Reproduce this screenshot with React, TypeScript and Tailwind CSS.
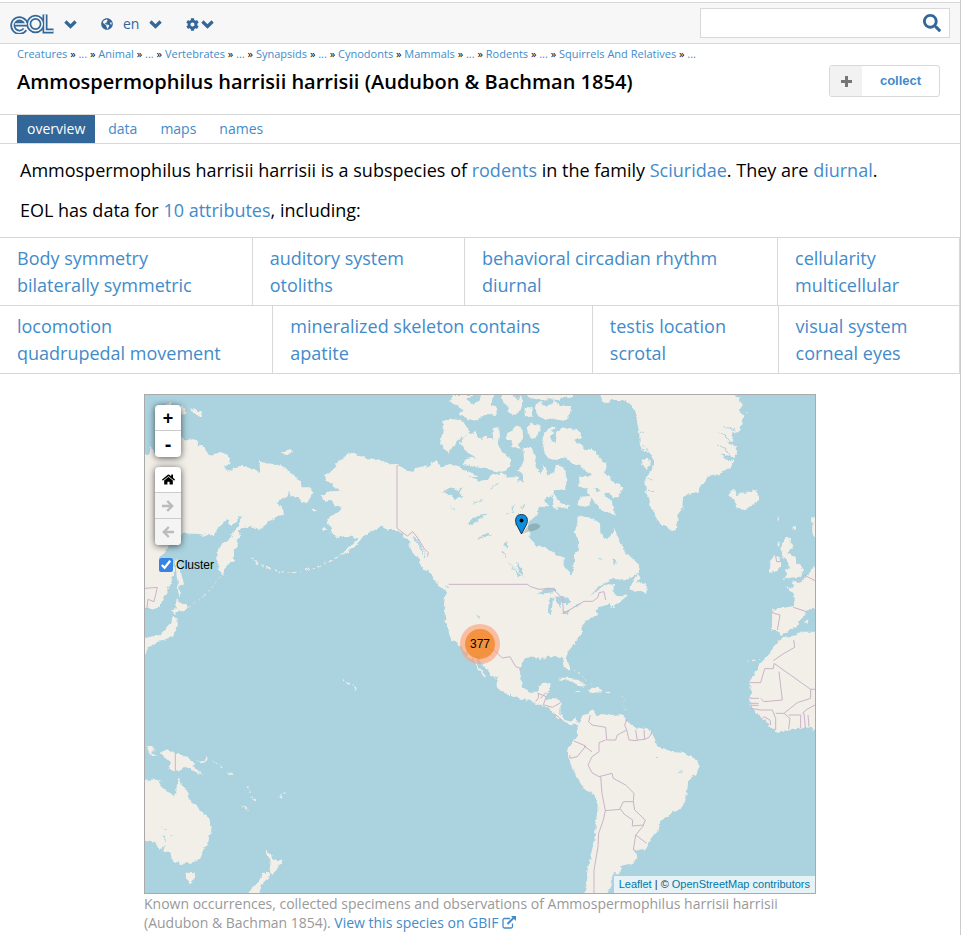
import { Fragment, type ReactNode } from "react";
import { FaCog, FaGlobeAmericas, FaHome, FaSearch } from "react-icons/fa";

const crumbs = ["Creatures", "...", "Animal", "...", "Vertebrates", "...", "Synapsids", "...", "Cynodonts", "Mammals", "...", "Rodents", "...", "Squirrels And Relatives", "..."];
const tabs = ["overview", "data", "maps", "names"];
const traits = [
  [["Body symmetry", "bilaterally symmetric"], ["auditory system", "otoliths"], ["behavioral circadian rhythm", "diurnal"], ["cellularity", "multicellular"]],
  [["locomotion", "quadrupedal movement"], ["mineralized skeleton contains", "apatite"], ["testis location", "scrotal"], ["visual system", "corneal eyes"]],
];

function Link({ children }: { children: ReactNode }) {
  return <a href="#" className="text-[#428bca]">{children}</a>;
}

function Logo() {
  return (
    <svg width="44" height="20" viewBox="0 0 44 20" fill="none" role="img" aria-label="EOL">
      <g stroke="#336699" strokeWidth="5">
        <path d="M35 0.500V17H43.500" />
        <circle cx="25.500" cy="10" r="6.700" />
        <path d="M15 15.300A6.700 6.700 0 1 1 16 10H5" />
      </g>
      <g stroke="#f7f7f7" strokeWidth="1.600">
        <path d="M35 0.500V17H43.500" />
        <circle cx="25.500" cy="10" r="6.700" />
        <path d="M15 15.300A6.700 6.700 0 1 1 16 10H5" />
      </g>
    </svg>
  );
}

function Chevron() {
  return (
    <svg width="13" height="9" viewBox="0 0 13 9" fill="none" stroke="currentColor" strokeWidth="3.200" aria-hidden="true">
      <path d="M1.400 1.500L6.500 6.500L11.600 1.500" />
    </svg>
  );
}

function Arrow({ left = false }: { left?: boolean }) {
  return (
    <svg width="12" height="12" viewBox="0 0 12 12" fill="none" stroke="currentColor" strokeWidth="2.400" aria-hidden="true">
      <path d={left ? "M12 6H2M6.800 1L1.800 6L6.800 11" : "M0 6H10M5.200 1L10.200 6L5.200 11"} />
    </svg>
  );
}

const land = [
  // Siberia
  "M-20 195L15 195L22 168L32 190L60 150L112 145L135 150L150 148L165 155L160 166L172 165L183 180L195 192L215 195L230 188L250 193L258 208L255 220L240 228L250 243L265 245L268 232L300 228L325 238L340 245L348 238L345 213L365 220L395 222L420 232L445 250L470 275L475 292L500 292L513 308L498 320L492 340L475 335L462 320L440 318L435 305L430 320L415 325L400 338L415 350L420 375L400 378L375 395L345 420L320 412L300 410L285 425L288 440L278 450L282 470L270 480L270 510L250 525L235 555L225 540L218 490L235 460L255 450L270 425L285 400L297 375L285 378L280 395L262 405L255 405L258 390L245 388L235 405L215 420L213 435L190 436L165 432L112 430L80 465L55 490L45 503L60 512L88 520L90 545L80 580L60 620L45 650L25 660L10 655L-20 665Z",
  "M92 510L108 520L112 550L120 583L105 590L112 620L103 610L100 570Z",
  "M98 625L115 640L132 652L115 664L100 664L92 674L84 662L95 655Z",
  "M85 680L100 685L102 705L92 725L80 740L60 750L40 752L30 765L15 770L12 784L3 790L-10 780L-10 745L20 740L50 735L70 712L82 700Z",
  "M414 188L425 178L442 177L447 187L430 193Z",
  "M138 55L155 60L178 68L172 80L155 78Z", "M112 48L125 52L127 70L112 75Z", "M64 42L80 35L80 50L64 48Z",
  "M496 355L512 357L522 362L510 365Z", "M532 416L545 415L550 422L538 424Z",
  // The Americas
  "M528 317L550 305L585 302L580 292L560 280L545 270L541 255L560 245L572 235L575 222L595 205L610 195L625 185L645 197L672 205L700 208L735 220L760 225L790 240L805 246L810 235L830 232L850 220L840 235L860 228L872 208L885 225L900 230L912 218L925 225L952 235L985 250L1010 265L1040 258L1072 250L1095 262L1120 262L1122 275L1140 272L1140 255L1122 240L1135 225L1140 208L1138 175L1160 170L1170 190L1178 215L1172 232L1190 250L1200 225L1215 255L1230 250L1236 222L1262 235L1270 270L1262 300L1232 300L1218 320L1200 330L1215 352L1187 350L1177 375L1160 392L1152 415L1157 440L1172 465L1202 475L1232 490L1262 505L1262 535L1282 553L1290 540L1287 500L1304 480L1307 455L1292 430L1300 400L1300 375L1345 385L1368 400L1369 430L1386 448L1404 430L1409 415L1419 435L1434 465L1444 485L1474 510L1487 530L1484 550L1454 568L1394 568L1364 592L1340 615L1360 602L1389 582L1414 585L1408 600L1413 615L1429 622L1449 610L1444 625L1419 640L1404 651L1396 642L1364 652L1358 662L1359 675L1344 680L1322 698L1312 710L1314 730L1300 750L1272 780L1267 800L1277 830L1272 845L1257 820L1252 805L1232 798L1207 800L1192 808L1172 800L1142 805L1130 830L1127 860L1137 890L1157 905L1182 905L1190 880L1220 877L1217 900L1207 915L1207 928L1232 928L1250 935L1249 970L1262 990L1282 995L1292 985L1304 1000L1312 980L1332 970L1349 958L1356 975L1379 972L1404 978L1439 975L1454 995L1474 1012L1519 1020L1534 1050L1539 1068L1584 1085L1624 1090L1659 1110L1666 1130L1654 1155L1632 1180L1627 1220L1609 1260L1579 1270L1549 1295L1544 1320L1524 1345L1504 1380L1489 1382L1466 1378L1478 1400L1469 1420L1432 1428L1429 1450L1409 1450L1404 1480L1384 1530L1320 1530L1327 1470L1332 1430L1344 1380L1352 1340L1359 1270L1362 1225L1344 1210L1317 1195L1307 1175L1282 1130L1270 1100L1274 1075L1292 1050L1302 1035L1300 1005L1277 1002L1257 993L1237 980L1227 965L1202 950L1172 935L1142 930L1112 920L1072 905L1060 890L1062 875L1037 845L1017 825L1007 800L992 795L1002 830L1027 860L1022 862L1002 840L990 815L977 805L952 770L930 752L918 740L904 690L900 640L907 600L912 590L894 590L872 570L862 555L847 540L832 525L822 505L802 480L792 450L760 420L732 420L712 410L692 420L670 432L650 450L635 470L610 485L580 500L610 478L635 455L640 445L620 440L600 442L580 440L560 428L562 415L548 400L555 385L580 370L590 350L570 345L560 330L550 335Z",
  "M895 584L912 596L909 604L888 591L870 576Z", "M822 514L834 510L840 525L842 540L832 530Z",
  // Arctic islands
  "M898 93L930 88L950 93L972 115L978 130L950 145L935 165L918 180L912 188L900 175L888 165L895 130Z",
  "M948 160L960 140L985 130L995 122L1000 140L1015 150L1025 140L1048 150L1045 115L1065 112L1068 140L1060 165L1080 190L1100 205L1098 232L1072 245L1040 240L1000 232L960 225L962 205L985 200L1000 205L975 190L960 178Z",
  "M1088 135L1105 120L1118 102L1135 120L1138 145L1125 160L1130 180L1105 172L1100 150L1088 150Z",
  "M1148 110L1165 100L1190 105L1185 125L1175 145L1155 145Z",
  "M1202 125L1222 110L1235 110L1220 140L1235 160L1240 125L1255 115L1280 115L1307 120L1312 140L1290 150L1315 165L1325 178L1344 175L1360 195L1385 220L1388 235L1378 245L1402 270L1438 292L1420 325L1408 325L1398 310L1375 308L1408 340L1412 375L1390 370L1362 350L1340 320L1325 295L1302 285L1310 270L1342 255L1320 240L1310 225L1280 218L1270 200L1240 210L1210 205L1202 190L1195 150Z",
  "M915 35L930 15L990 15L970 28L990 45L1005 30L1010 10L1050 15L1040 40L1060 55L1055 75L1025 72L1015 80L990 92L970 85L945 75L955 58L935 45Z",
  "M1072 10L1100 10L1120 32L1130 15L1138 35L1130 60L1110 75L1095 68L1090 45L1078 35Z",
  "M1145 55L1162 50L1165 80L1145 78Z",
  "M1176 40L1192 35L1200 48L1225 42L1230 30L1245 48L1278 48L1282 70L1262 92L1235 88L1202 88L1188 80L1172 62Z",
  "M1142 10L1290 10L1285 25L1260 22L1245 30L1210 28L1195 30L1160 25Z",
  "M1225 305L1235 318L1248 335L1275 345L1270 360L1245 350L1235 358L1225 345Z",
  "M1303 345L1310 320L1340 318L1340 345L1320 350Z", "M1305 260L1325 260L1322 280L1306 275Z",
  // Greenland, Iceland, Newfoundland
  "M1365 0L1375 35L1390 40L1405 30L1440 30L1465 50L1475 75L1485 125L1488 165L1495 180L1520 190L1530 215L1528 235L1505 260L1505 305L1515 320L1520 350L1550 405L1570 405L1585 423L1595 420L1602 380L1615 355L1617 325L1628 315L1660 305L1680 275L1694 260L1720 255L1750 240L1773 213L1744 208L1730 190L1775 205L1776 170L1750 155L1768 150L1760 130L1790 120L1793 95L1800 85L1788 60L1795 40L1775 15L1775 0Z",
  "M1496 205L1515 208L1520 225L1505 235L1495 225Z", "M1804 65L1812 68L1806 75Z",
  "M1756 315L1765 298L1780 315L1795 305L1822 305L1828 295L1845 315L1845 330L1825 345L1800 360L1775 348L1772 330Z",
  "M1458 600L1465 580L1480 553L1487 565L1480 575L1500 578L1512 600L1508 612L1488 605Z",
  // Europe and Africa
  "M1914 460L1928 445L1938 443L1936 460L1948 468L1940 480L1930 490L1948 495L1958 520L1970 530L1977 540L1970 560L1940 563L1915 570L1930 552L1920 545L1935 535L1928 510L1915 500L1912 485Z",
  "M1876 515L1890 500L1905 498L1912 515L1908 535L1885 548L1875 545Z",
  "M2030 530L2010 530L1995 550L1975 570L1960 580L1945 572L1950 590L1925 590L1940 600L1952 620L1950 648L1930 652L1900 655L1885 655L1884 670L1885 695L1880 715L1890 722L1905 724L1912 735L1930 728L1955 710L1965 695L1988 665L2000 655L2030 652Z",
  "M2030 725L1980 725L1950 737L1920 740L1905 750L1885 770L1878 790L1850 820L1825 860L1816 880L1824 910L1816 935L1822 955L1844 975L1860 990L1880 1010L1900 1025L1940 1020L1970 1015L2000 1012L2030 1030Z",
  "M2030 385L2004 385L2005 425L2014 450L2030 430Z", "M1982 695L1990 692L1988 702Z", "M1900 385L1906 382L1902 395Z", "M1948 412L1954 408L1952 422Z", "M1902 450L1907 465L1900 475Z",
  // Caribbean
  "M1240 873L1255 863L1280 863L1300 870L1322 886L1328 890L1305 888L1285 875L1265 868Z",
  "M1334 900L1344 893L1360 894L1378 904L1360 906L1344 910Z", "M1295 906L1310 906L1306 911Z", "M1388 905L1402 905L1400 910L1389 909Z",
  // Oceania
  "M48 1087L65 1078L80 1085L105 1092L130 1100L150 1118L145 1125L160 1140L175 1152L155 1150L135 1135L120 1130L110 1140L92 1142L70 1130L82 1118L68 1108Z",
  "M5 1070L25 1068L35 1080L20 1088L40 1095L22 1096Z", "M156 1112L180 1110L190 1098L196 1105L180 1118Z", "M205 1110L220 1125L214 1122Z", "M224 1126L238 1135L232 1135Z", "M248 1145L265 1149L270 1156L254 1152Z",
  "M-10 1168L52 1170L48 1190L88 1216L96 1210L100 1180L106 1158L115 1190L130 1205L135 1230L155 1243L170 1262L195 1285L202 1320L192 1355L172 1395L168 1410L140 1418L110 1422L90 1412L76 1390L60 1385L65 1365L48 1380L36 1355L-10 1348Z",
  "M125 1448L155 1450L150 1470L138 1480L128 1470Z",
  "M365 1378L380 1392L385 1408L414 1412L400 1435L385 1455L378 1445L382 1425Z",
  "M358 1448L376 1450L372 1465L350 1485L348 1505L335 1530L300 1530L315 1505L338 1485Z",
  "M290 1240L315 1260L305 1257Z", "M403 1218L412 1216L410 1223Z", "M630 892L639 895L634 900Z", "M414 1210L425 1207L420 1211Z",
];

const lakes = [
  "M895 305L920 292L935 300L956 292L945 310L958 320L935 330L920 315Z",
  "M970 400L990 380L1005 378L1028 372L1015 385L1000 395L985 405Z",
  "M1000 445L1020 433L1042 432L1020 440L1004 447Z",
  "M1102 515L1112 535L1122 562L1132 558L1115 538Z", "M1116 515L1134 535L1140 565L1126 545Z",
  "M1180 612L1208 593L1230 590L1243 605L1215 608Z",
  "M1215 630L1228 622L1224 650L1222 672L1212 670Z",
  "M1230 620L1262 618L1282 635L1268 642L1252 635L1250 655L1240 640Z",
  "M1250 672L1285 655L1264 672Z", "M1285 650L1312 642L1304 650Z",
  "M978 262L1020 260L1042 255L1035 268L1010 272Z",
  "M1085 450L1092 458L1088 478L1080 470Z", "M1112 400L1120 395L1118 410Z", "M997 672L1005 680L1002 685Z",
  "M1102 350L1110 342L1105 365Z", "M1132 348L1145 345L1138 356Z", "M1085 465L1092 452L1086 480Z",
  "M1362 505L1372 508L1366 514Z", "M1405 510L1418 515L1410 523Z", "M1352 295L1370 300L1355 310Z",
];

const borders =
  "M759 225V415L790 438L806 425L822 445L840 475L853 488L850 500 M914 583H1150L1160 590L1185 598L1225 595L1256 625L1258 670L1290 652L1320 634L1346 634L1362 622L1365 608L1380 605L1385 630" +
  " M970 770L1020 772L1052 782L1075 804L1098 800L1115 830L1132 836 M1175 935L1184 922L1182 910L1207 920L1198 944L1225 952L1250 938 M1190 925L1205 908 M1232 972L1256 992" +
  " M1290 1053L1325 1068L1300 1100L1278 1105L1277 1095 M1320 1068L1344 1085 M1339 975L1334 995L1344 1005L1385 1012L1388 1050L1415 1050L1420 1035L1448 1020L1442 1005L1448 990 M1448 1020L1455 1050L1480 1052L1475 1020 M1500 1020L1502 1048L1515 1042L1525 1025 M1480 1050L1502 1048 M1385 1050L1365 1058V1085L1344 1100L1332 1125L1344 1148 M1344 1148L1365 1160L1404 1150L1408 1165L1445 1185L1470 1210L1468 1235L1438 1235L1428 1255L1440 1272L1466 1290L1465 1308L1498 1305L1504 1290L1488 1275L1472 1260L1468 1235 M1500 1305L1475 1335L1508 1360 M1475 1335L1468 1380 M1370 1160L1374 1210L1384 1262L1378 1290L1364 1330L1362 1370L1350 1440L1350 1510 M1384 1262L1428 1258" +
  " M1816 878H1850L1862 836H1888L1890 820L2000 898H2013 M1905 845L1915 930L1860 935L1850 925 M1949 750L1952 772L1920 790L1888 812 M2000 898V925L1960 938L1920 970H1895 M1820 955L1850 960L1885 960L1895 985V1020 M1850 990L1860 980L1878 990L1880 1005 M1920 970L1938 985L1934 1018 M1934 975L1970 975V1015 M1818 925H1845 M1820 940H1844 M1820 946H1844 M1975 972L1985 960L2013 945 M1980 970L1984 1012 M1992 975L1995 1010" +
  " M1884 668L1908 675L1900 720 M1948 652L1988 665 M1980 555L2013 572 M1895 498L1898 515H1912 M94 1087V1142 M3 595L40 592L30 635L12 628L8 660";

function WorldMap() {
  return (
    <svg className="block h-full w-full" viewBox="3 15 2010 1494" preserveAspectRatio="xMidYMid slice" role="img" aria-label="Occurrence map">
      <defs>
        <filter id="coast" x="-20" y="-20" width="2080" height="1580" filterUnits="userSpaceOnUse">
          <feTurbulence type="fractalNoise" baseFrequency="0.06" numOctaves="3" seed="4" />
          <feDisplacementMap in="SourceGraphic" scale="15" xChannelSelector="R" yChannelSelector="G" />
        </filter>
      </defs>
      <rect x="0" y="0" width="2040" height="1540" fill="#aad3df" />
      <g filter="url(#coast)">
        <path d={land.join("")} fill="#f2efe9" />
        <path d={lakes.join("")} fill="#aad3df" />
        <g fill="none" stroke="#f2efe9" strokeWidth="4">
          <path d="M600 488L560 513L510 535L450 547L400 544L360 530L310 500" strokeDasharray="14 8 5 12" />
          <path d="M230 560L195 605L160 635L128 652" strokeWidth="2" strokeDasharray="8 10" />
          <path d="M310 1190L325 1220L335 1240" strokeDasharray="6 8" />
          <path d="M598 872L628 888" strokeDasharray="6 10" />
          <path d="M1435 918L1442 960" strokeWidth="2" strokeDasharray="4 8" />
          <path d="M1290 840L1340 880" strokeWidth="2" strokeDasharray="5 10" />
          <path d="M1810 812L1845 810" strokeDasharray="6 10" />
        </g>
        <g fill="none" stroke="#aad3df" strokeWidth="3">
          <path d="M808 440L830 470L838 495M820 450L845 490L840 505M985 340L1015 332M920 350L930 362M1035 295L1060 280M1090 375L1110 365M1115 378L1130 365M1075 480L1085 500M1100 520L1110 540" />
          <path d="M1720 165L1745 180L1760 205M1725 125L1760 150M1740 110L1775 120M1488 125L1500 130M1495 165L1515 185M1510 265L1525 270M1512 300L1528 305" />
          <path d="M55 1310L65 1320M58 1340L62 1355M80 1337L88 1340M1600 1148L1615 1145M1535 1098L1542 1103" />
        </g>
      </g>
      <path d={borders} fill="none" stroke="#c9b4c8" strokeWidth="3" />
    </svg>
  );
}

const mapButton = "flex h-[26px] w-[26px] items-center justify-center border-b border-[#ccc] last:border-b-0";

export default function App() {
  return (
    <div className="mr-0.5 min-h-screen border-r border-[#ccc] bg-white font-['Open_Sans','Noto_Sans',sans-serif] text-black">
      <header className="pt-0.5">
        <div className="flex h-[42px] items-center border-y border-[#d8d8d8] bg-[#f7f7f7] px-2.5 text-[#336699]">
          <button type="button" aria-label="EOL menu" className="flex items-center gap-2.5 pt-0.5"><Logo /><Chevron /></button>
          <button type="button" aria-label="Language" className="ml-6 flex items-center gap-2.5 pt-0.5 text-sm"><FaGlobeAmericas size={12} /><span>en</span><Chevron /></button>
          <button type="button" aria-label="Settings" className="ml-6 flex items-center gap-0.5 pt-0.5"><FaCog size={13} /><Chevron /></button>
          <form className="ml-auto flex h-[30px] w-[250px] items-center border border-[#d8d8d8] bg-white">
            <input type="text" aria-label="Search" className="h-full min-w-0 flex-1 px-2 text-sm outline-none" />
            <button type="button" aria-label="Submit search" className="px-2"><FaSearch size={18} /></button>
          </form>
        </div>
        <nav aria-label="Breadcrumb" className="px-[17px] text-[11px] leading-5">
          {crumbs.map((crumb, i) => <Fragment key={i}>{i > 0 && " » "}<Link>{crumb}</Link></Fragment>)}
        </nav>
        <div className="flex h-[50px] items-start justify-between pr-5 pl-[17px]">
          <h1 className="pt-1 text-xl leading-7 font-semibold">Ammospermophilus harrisii harrisii (Audubon &amp; Bachman 1854)</h1>
          <button type="button" className="mt-px flex h-8 w-[111px] items-stretch overflow-hidden rounded-[3px] border border-[#d8d8d8] font-['Liberation_Sans',Arial,sans-serif] text-[13px] font-bold text-[#428bca]">
            <span className="flex w-8 items-center justify-center bg-[#f2f2f2] text-[#767676]">
              <svg width="11" height="11" viewBox="0 0 11 11" fill="none" stroke="currentColor" strokeWidth="3" aria-hidden="true"><path d="M5.500 0V11M0 5.500H11" /></svg>
            </span>
            <span className="flex flex-1 items-center justify-center">collect</span>
          </button>
        </div>
        <nav aria-label="Sections" className="flex h-[30px] gap-[3px] border-y border-[#d8d8d8] px-[17px] text-sm leading-7">
          {tabs.map((tab, i) => <a key={tab} href="#" className={i === 0 ? "bg-[#336699] px-2.5 text-white" : "px-2.5 text-[#428bca]"}>{tab}</a>)}
        </nav>
      </header>

      <main>
        <section className="px-5 pt-[13px] pb-[13px] text-lg leading-[27px]">
          <p>Ammospermophilus harrisii harrisii is a subspecies of <Link>rodents</Link> in the family <Link>Sciuridae</Link>. They are <Link>diurnal</Link>.</p>
          <p className="mt-[13px]">EOL has data for <Link>10 attributes</Link>, including:</p>
        </section>
        <section className="border-t border-[#d8d8d8] text-lg leading-[27px]">
          {traits.map((row, r) => (
            <div key={r} className="flex border-b border-[#d8d8d8]">
              {row.map(([name, value]) => (
                <a key={name} href="#" className="flex-auto border-r border-[#d8d8d8] pt-[7px] pb-1.5 pl-[17px] text-[#428bca]">
                  <div>{name}</div><div>{value}</div>
                </a>
              ))}
            </div>
          ))}
        </section>

        <figure className="mx-auto mt-5 max-w-[672px]">
          <div className="relative h-[500px] overflow-hidden border border-[#aaa] font-['Liberation_Sans',Arial,sans-serif] text-xs">
            <WorldMap />
            <div className="absolute top-2.5 left-2.5 flex flex-col items-start gap-2.5">
              <div className="overflow-hidden rounded bg-white text-lg font-bold shadow-[0_1px_7px_rgba(0,0,0,0.65)]">
                <button type="button" aria-label="Zoom in" className={mapButton}>+</button>
                <button type="button" aria-label="Zoom out" className={`${mapButton} text-xl`}>-</button>
              </div>
              <div className="overflow-hidden rounded bg-white shadow-[0_1px_7px_rgba(0,0,0,0.65)]">
                <button type="button" aria-label="Home" className={mapButton}><FaHome size={13} /></button>
                <button type="button" disabled aria-label="Forward" className={`${mapButton} bg-[#f4f4f4] text-[#bbb]`}><Arrow /></button>
                <button type="button" disabled aria-label="Back" className={`${mapButton} bg-[#f4f4f4] text-[#bbb]`}><Arrow left /></button>
              </div>
              <label className="mt-0.5 ml-1 flex items-center gap-[3px]"><input type="checkbox" defaultChecked className="h-3.5 w-3.5 accent-[#3584e4]" />Cluster</label>
            </div>
            <button type="button" className="absolute top-[229px] left-[315px] flex h-10 w-10 items-center justify-center rounded-full bg-[#fd9c73]/60">
              <span className="flex h-[30px] w-[30px] items-center justify-center rounded-full bg-[#f18017]/70">377</span>
            </button>
            <svg className="absolute top-[118px] left-[369px]" width="28" height="22" viewBox="0 0 28 22" aria-hidden="true">
              <path d="M8 21L14 13C18 9 27 10 26 14C24 18 14 18 8 21Z" fill="#000" opacity="0.16" />
              <path d="M7.500 21L3 12.500C0 7 2 1.500 7.500 1.500S15 7 12 12.500Z" fill="#0d8fdd" stroke="#17384d" />
              <circle cx="7.500" cy="7.500" r="2" fill="#000" />
            </svg>
            <div className="absolute right-0 bottom-0 bg-white/70 px-[5px] text-[11px] leading-[17px] text-[#333]">
              <a href="#" className="text-[#0078a8]">Leaflet</a> | © <a href="#" className="text-[#0078a8]">OpenStreetMap contributors</a>
            </div>
          </div>
          <figcaption className="text-sm leading-[19px] text-[#999]">
            Known occurrences, collected specimens and observations of Ammospermophilus harrisii harrisii (Audubon &amp; Bachman 1854). <Link>View this species on GBIF
              <svg className="ml-1 inline-block align-[-1px]" width="14" height="13" viewBox="0 0 14 13" fill="none" stroke="currentColor" strokeWidth="1.300" aria-hidden="true">
                <path d="M8 2.500H2.500Q1 2.500 1 4V10.500Q1 12 2.500 12H9Q10.500 12 10.500 10.500V7.500" /><path d="M5.500 8L12 1.500" strokeWidth="2" /><path d="M9 0H14V5Z" fill="currentColor" stroke="none" />
              </svg>
            </Link>
          </figcaption>
        </figure>
      </main>
    </div>
  );
}
